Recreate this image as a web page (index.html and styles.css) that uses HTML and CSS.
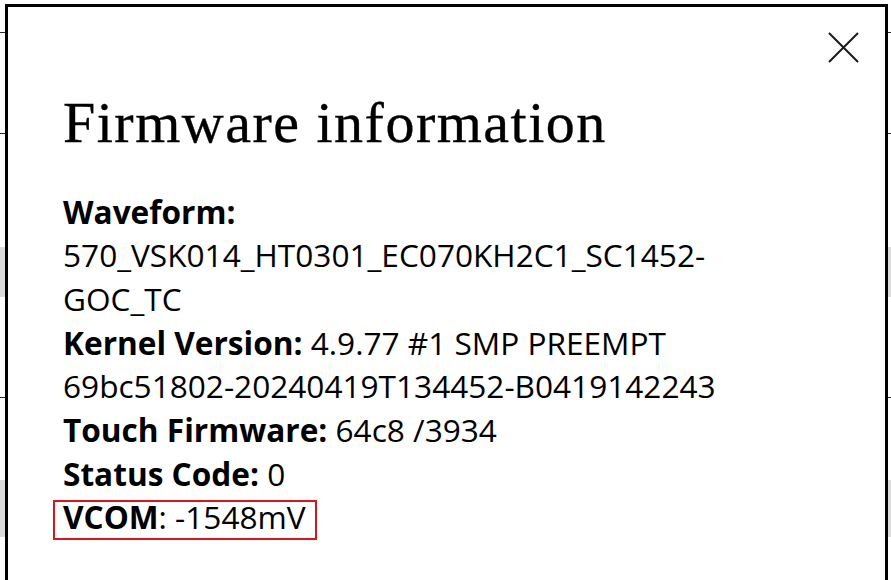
FILE: index.html
```html
<!DOCTYPE html>
<html lang="en">
<head>
<meta charset="utf-8">
<title>Firmware information</title>
<link rel="stylesheet" href="styles.css">
</head>
<body>
<div class="bg-list">
  <div class="row row-1"></div>
  <div class="row row-2"></div>
  <div class="row row-3"></div>
  <div class="row row-4 shaded"></div>
  <div class="row row-5"></div>
  <div class="row row-6"></div>
  <div class="row row-7 shaded"></div>
  <div class="row row-8"></div>
</div>

<div class="dialog" role="dialog" aria-labelledby="dlg-title">
  <button class="close" aria-label="Close">
    <svg width="31" height="31" viewBox="0 0 31 31" aria-hidden="true">
      <path d="M1 1 L30 30 M30 1 L1 30" stroke="#1a1a1a" stroke-width="2" fill="none"/>
    </svg>
  </button>
  <h1 id="dlg-title" class="title">Firmware information</h1>
  <div class="info">
    <p><b>Waveform:</b><br>570_VSK014_HT0301_EC070KH2C1_SC1452-GOC_TC</p>
    <p><b>Kernel Version:</b> 4.9.77 #1 SMP PREEMPT 69bc51802-20240419T134452-B0419142243</p>
    <p><b>Touch Firmware:</b> 64c8 /3934</p>
    <p><b>Status Code:</b> 0</p>
    <p><span class="vcom"><b>VCOM</b>: -1548mV</span></p>
  </div>
</div>
</body>
</html>
```

FILE: styles.css
```css
html, body {
  margin: 0;
  padding: 0;
  background: #fff;
  overflow: hidden;
  height: 580px;
}

body {
  position: relative;
  font-family: "Open Sans", "Liberation Sans", Arial, sans-serif;
  color: #000;
}

.bg-list {
  width: 891px;
}

.row {
  border-bottom: 1px solid #2a2a2a;
  box-sizing: border-box;
}

.row-1 { height: 33px; }
.row-2 { height: 101px; }
.row-3 { height: 113px; border-bottom: none; }
.row-4 { height: 50px; border-bottom: none; }
.row-5 { height: 101px; }
.row-6 { height: 82px; border-bottom: none; }
.row-7 { height: 57px; border-bottom: none; }
.row-8 { height: 60px; border-bottom: none; }

.shaded { background: #dcdcdc; }

.dialog {
  position: absolute;
  left: 5px;
  top: 4px;
  width: 883px;
  height: 640px;
  box-sizing: border-box;
  border: 3px solid #000;
  background: #fff;
  padding: 81px 55px 0 55px;
}

.close {
  position: absolute;
  top: 25px;
  right: 26px;
  width: 31px;
  height: 31px;
  padding: 0;
  margin: 0;
  border: none;
  background: transparent;
  display: flex;
}

.title {
  margin: 0;
  font-family: "Liberation Serif", "Times New Roman", serif;
  font-weight: 400;
  font-size: 58px;
  line-height: 70px;
  letter-spacing: 1.5px;
  -webkit-text-stroke: 0.35px #000;
  color: #000;
}

.info {
  margin-top: 31.5px;
  max-width: 725px;
  font-size: 31.6px;
  line-height: 43.7px;
}

.info p {
  margin: 0;
}

.info b {
  font-weight: 700;
}

.vcom {
  display: inline-block;
  line-height: 29.4px;
  border: 2px solid #d8141c;
  padding: 0 9px 6.6px 8px;
  margin-left: -10px;
}
```
